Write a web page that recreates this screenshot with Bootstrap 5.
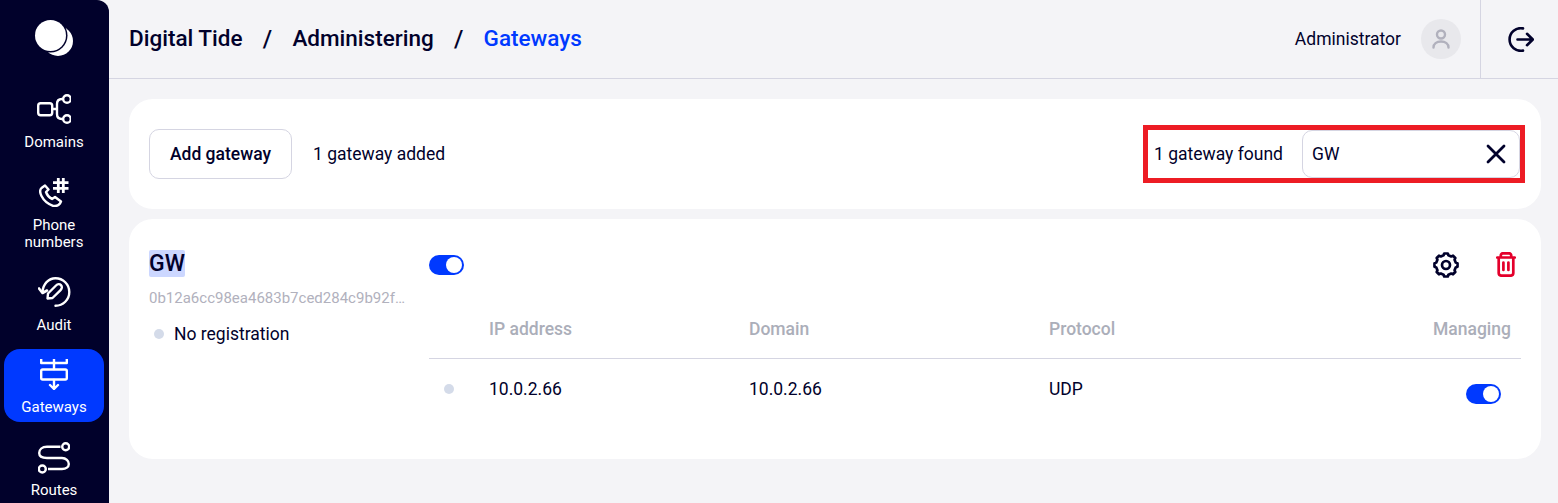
<!DOCTYPE html>
<html lang="en">
<head>
    <meta charset="UTF-8">
    <meta name="viewport" content="width=device-width, initial-scale=1.0">
    <title>Gateways</title>
    <link href="https://cdn.jsdelivr.net/npm/bootstrap@5.3.1/dist/css/bootstrap.min.css" rel="stylesheet">
    <style>
        html, body { height: 503px; overflow: hidden; }
        body { background: #f4f4f7; font-family: Roboto, "Liberation Sans", sans-serif; font-size: 17.5px; color: #01012b; }
        .shell { height: 503px; }
        .side-rail { width: 109px; flex: none; background: #01012b; border-radius: 0 12px 0 0; overflow: hidden; padding: 0 4px; }
        .side-logo { flex: none; height: 84px; padding-top: 18px; }
        .side-logo svg { display: block; margin-left: 30px; }
        .side-item { flex: none; width: 100px; color: #fff; font-size: 15px; line-height: 17px; text-align: center; text-decoration: none; border-radius: 16px; padding-top: 10px; height: 73px; margin-bottom: 10px; }
        .side-ico { height: 40px; display: flex; justify-content: center; align-items: flex-start; }
        .side-item.tall { height: 90px; }
        .side-item.short { height: 72px; }
        .side-item.on { background: #0039ff; }
        .top-head { height: 79px; border-bottom: 1px solid #d5d5e2; padding-left: 20px; }
        .crumbs { font-size: 22.5px; font-weight: 500; gap: 20.25px; }
        .crumbs .sep { font-size: 24px; line-height: 27px; }
        .crumbs .here { color: #0039ff; }
        .admin-name { margin-right: 20px; }
        .avatar { width: 40px; height: 40px; background: #e8e8ec; margin-right: 19px; }
        .logout-box { width: 78px; height: 78px; border-left: 1px solid #d5d5e2; padding-left: 3px; }
        .work { padding: 20px 17px 0 20px; }
        .panel { background: #fff; border-radius: 24px; }
        .tool-panel { height: 110px; padding: 0 16px 0 20px; margin-bottom: 10px; }
        .add-btn { height: 50px; width: 143px; border: 1px solid #d5d5e2; border-radius: 10px; background: #fff; font-weight: 500; font-size: 17.5px; color: #01012b; margin-right: 21px; }
        .found-box { width: 382px; height: 58px; border: 5px solid #ed1c24; padding-left: 6px; }
        .found-input { width: 218px; height: 48px; border: 1px solid #d5d5e2; border-radius: 10px; margin-left: auto; padding: 0 13px 0 9px; }
        .gw-panel { height: 240px; padding: 0 20px; }
        .gw-info { width: 280px; flex: none; padding-top: 31px; }
        .gw-name { font-size: 23px; font-weight: 500; line-height: 27px; background: #ccd7ff; border-radius: 2px; margin-bottom: 12px; }
        .gw-id { font-size: 15px; color: #b1b1bd; line-height: 18px; white-space: nowrap; margin-bottom: 14px; }
        .reg-line { gap: 10px; padding-left: 5px; }
        .dot { width: 10px; height: 10px; background: #d4dbe9; display: inline-block; flex: none; }
        .gw-detail { min-width: 0; }
        .gw-top { height: 25px; margin-top: 33px; }
        .tog { width: 35px; height: 20px; background: #0039ff; border-radius: 10px; display: block; padding: 2px; }
        .tog i { display: block; width: 16px; height: 16px; background: #fff; border-radius: 50%; margin-left: auto; }
        .gw-cols { display: grid; grid-template-columns: 60px 260px 300px 1fr 100px; align-items: center; }
        .gw-cols.head { color: #abaeb9; font-weight: 500; height: 82px; padding-top: 24px; border-bottom: 1px solid #d5d5e2; }
        .gw-cols.body-row { height: 60px; }
        .dot-cell { padding-left: 15px; display: flex; }
        .manage-cell { padding-right: 10px; }
        .manage-tog { padding-right: 20px; padding-top: 10px; }
        .icon-gap { gap: 37px; margin-right: 5px; }
    </style>
</head>
<body>
    <div class="shell d-flex">
        <nav class="side-rail d-flex flex-column">
            <div class="side-logo">
                <svg width="40" height="40" viewBox="0 0 40 40">
                    <circle cx="24" cy="23" r="15" fill="#fff"/>
                    <circle cx="16.500" cy="17.500" r="17" fill="#01012b"/>
                    <circle cx="16.500" cy="17.500" r="15.500" fill="#fff"/>
                </svg>
            </div>
            <a class="side-item" href="#">
                <div class="side-ico">
                    <svg width="34" height="30" viewBox="0 0 34 30" fill="none" stroke="#fff" stroke-width="2.400">
                        <rect x="1.200" y="9.200" width="14" height="12" rx="2.500"/>
                        <circle cx="30" cy="5" r="3.800"/>
                        <circle cx="30" cy="25" r="3.800"/>
                        <path d="M15 15h5M26 5h-1c-3 0-5 2-5 5v10c0 3 2 5 5 5h1"/>
                    </svg>
                </div>
                Domains
            </a>
            <a class="side-item tall" href="#">
                <div class="side-ico">
                    <svg width="30" height="30" viewBox="0 0 30 30" fill="none" stroke="#fff" stroke-width="2.400" stroke-linejoin="round">
                        <path d="M6 8.500 2.500 11C.5 13 1 16 2.500 19 5 24 9 27 14 28.800c3 .7 5.500-.3 7-2.300l1-2-6-4.500-3 2c-3-1.500-5-4-6-7l2.500-2.500z"/>
                        <path d="M14 5.700h15.500M14 11.300h15.500M19.300 1v15M24.300 1v15" stroke-width="2.800"/>
                    </svg>
                </div>
                Phone<br>numbers
            </a>
            <a class="side-item short" href="#">
                <div class="side-ico">
                    <svg width="33" height="30" viewBox="0 0 33 30" fill="none" stroke="#fff" stroke-width="2.400" stroke-linecap="round" stroke-linejoin="round">
                        <path d="M4.500 15C5 7 10.500 1.200 17.500 1.200a13.800 13.800 0 0 1 0 27.600"/>
                        <path d="M1 11.500 4.500 16 9 13.500" stroke-width="2.600"/>
                        <path d="M9.500 21.500l.5-5L18 8.500c1.600-1.600 3.800-1.600 5-.4s1.200 3.400-.4 5L14.500 21z"/>
                    </svg>
                </div>
                Audit
            </a>
            <a class="side-item on" href="#">
                <div class="side-ico">
                    <svg width="28" height="31" viewBox="0 0 28 31" fill="none" stroke="#fff" stroke-width="2.400" stroke-linecap="round" stroke-linejoin="round">
                        <path d="M1.200 0v4M26.800 0v4M14 0v10M1.200 4h25.600"/>
                        <rect x="1.200" y="10.500" width="25.600" height="10" rx="1.500"/>
                        <path d="M14 21v9M10 26l4 4 4-4"/>
                    </svg>
                </div>
                Gateways
            </a>
            <a class="side-item" href="#">
                <div class="side-ico">
                    <svg width="32" height="32" viewBox="0 0 32 32" fill="none" stroke="#fff" stroke-width="2.400">
                        <circle cx="27.700" cy="4.700" r="3.500"/>
                        <circle cx="4.300" cy="27" r="3.500"/>
                        <path d="M22.500 4.700H9C4 4.700 1.200 7.500 1.200 11S4 16 9 16h15c4 0 6.800 3 6.800 6s-2.800 5-6.800 5H10"/>
                    </svg>
                </div>
                Routes
            </a>
        </nav>
        <div class="flex-grow-1">
            <header class="top-head d-flex align-items-center">
                <div class="crumbs d-flex align-items-center flex-grow-1">
                    <span>Digital Tide</span><span class="sep">/</span><span>Administering</span><span class="sep">/</span><span class="here">Gateways</span>
                </div>
                <span class="admin-name">Administrator</span>
                <span class="avatar rounded-circle d-flex align-items-center justify-content-center">
                    <svg width="18" height="20" viewBox="0 0 18 20" fill="none" stroke="#b1b1bd" stroke-width="2.400" stroke-linecap="round">
                        <circle cx="9" cy="5.500" r="4"/>
                        <path d="M1.500 18.500c0-3.500 3-6 7.500-6s7.500 2.500 7.500 6"/>
                    </svg>
                </span>
                <span class="logout-box d-flex align-items-center justify-content-center">
                    <svg width="26" height="25" viewBox="0 0 26 25" fill="none" stroke="#01012b" stroke-width="2.600" stroke-linecap="round" stroke-linejoin="round">
                        <path d="M15 1.400A11.300 11.300 0 1 0 15 23.600"/>
                        <path d="M9.500 12.500h15.300M19 6.800l5.800 5.700-5.800 5.700"/>
                    </svg>
                </span>
            </header>
            <main class="work">
                <section class="panel tool-panel d-flex align-items-center">
                    <button class="add-btn" type="button">Add gateway</button>
                    <span class="flex-grow-1">1 gateway added</span>
                    <div class="found-box d-flex align-items-center">
                        <span>1 gateway found</span>
                        <div class="found-input d-flex align-items-center justify-content-between">
                            <span>GW</span>
                            <svg width="20" height="20" viewBox="0 0 20 20" stroke="#01012b" stroke-width="2.800" stroke-linecap="round"><path d="M2 2l16 16M18 2 2 18"/></svg>
                        </div>
                    </div>
                </section>
                <section class="panel gw-panel d-flex">
                    <div class="gw-info">
                        <div class="d-flex"><span class="gw-name">GW</span></div>
                        <div class="gw-id">0b12a6cc98ea4683b7ced284c9b92f…</div>
                        <div class="reg-line d-flex align-items-center"><span class="dot rounded-circle"></span><span>No registration</span></div>
                    </div>
                    <div class="gw-detail flex-grow-1">
                        <div class="gw-top d-flex justify-content-between align-items-center">
                            <span class="tog"><i></i></span>
                            <div class="d-flex icon-gap">
                                <svg width="26" height="26" viewBox="-13 -13 26 26" fill="none" stroke="#01012b" stroke-width="2.700" stroke-linejoin="round">
                                    <circle r="4"/>
                                    <polygon points="-2.420,-9.700 -1.800,-11.500 1.800,-11.500 2.420,-9.700 5.150,-8.570 7,-9.300 9.300,-7 8.570,-5.150 9.700,-2.420 11.500,-1.800 11.500,1.800 9.700,2.420 8.570,5.150 9.300,7 7,9.300 5.150,8.570 2.420,9.700 1.800,11.500 -1.800,11.500 -2.420,9.700 -5.150,8.570 -7,9.300 -9.300,7 -8.570,5.150 -9.700,2.420 -11.500,1.800 -11.500,-1.800 -9.700,-2.420 -8.570,-5.150 -9.300,-7 -7,-9.300 -5.150,-8.570"/>
                                </svg>
                                <svg width="20" height="25" viewBox="0 0 20 25" fill="none" stroke="#e4002b" stroke-width="2.700" stroke-linecap="round" stroke-linejoin="round">
                                    <path d="M1.300 5.500h17.400M4.800 5V3.300c0-1 1-2 2-2h6.400c1 0 2 1 2 2V5M2.700 5.500V21c0 1.500 1 2.700 3 2.700h8.600c2 0 3-1.200 3-2.700V5.500M7.400 10.500v7.500M12.400 10.500v7.500"/>
                                </svg>
                            </div>
                        </div>
                        <div class="gw-cols head">
                            <span></span><span>IP address</span><span>Domain</span><span>Protocol</span><span class="manage-cell text-end">Managing</span>
                        </div>
                        <div class="gw-cols body-row">
                            <span class="dot-cell"><span class="dot rounded-circle"></span></span>
                            <span>10.0.2.66</span><span>10.0.2.66</span><span>UDP</span>
                            <span class="manage-tog d-flex justify-content-end"><span class="tog"><i></i></span></span>
                        </div>
                    </div>
                </section>
            </main>
        </div>
    </div>
    <script src="https://cdn.jsdelivr.net/npm/bootstrap@5.3.1/dist/js/bootstrap.bundle.min.js"></script>
</body>
</html>
